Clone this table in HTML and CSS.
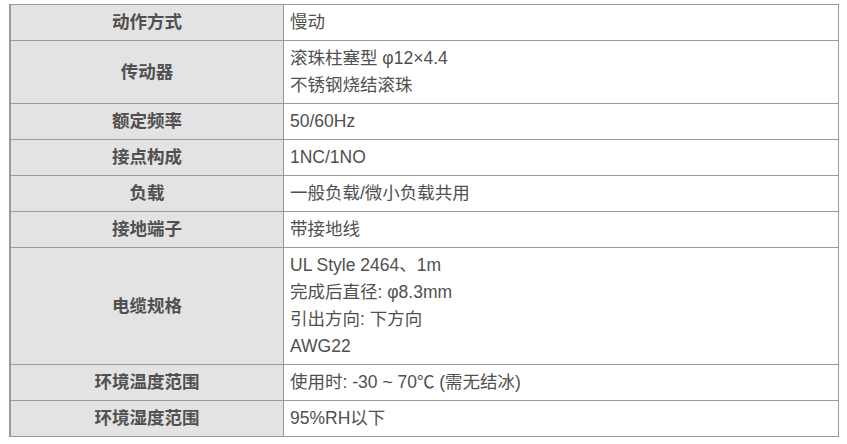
FILE: index.html
```html
<!DOCTYPE html>
<html lang="zh-CN">
<head>
<meta charset="utf-8">
<link rel="stylesheet" href="styles.css">
</head>
<body>
<table class="spec">
  <tbody>
    <tr><th>动作方式</th><td>慢动</td></tr>
    <tr><th>传动器</th><td>滚珠柱塞型 φ12×4.4<br>不锈钢烧结滚珠</td></tr>
    <tr><th>额定频率</th><td>50/60Hz</td></tr>
    <tr><th>接点构成</th><td>1NC/1NO</td></tr>
    <tr><th>负载</th><td>一般负载/微小负载共用</td></tr>
    <tr><th>接地端子</th><td>带接地线</td></tr>
    <tr><th>电缆规格</th><td>UL Style 2464、1m<br>完成后直径: φ8.3mm<br>引出方向: 下方向<br>AWG22</td></tr>
    <tr><th>环境温度范围</th><td>使用时: -30 ~ 70℃ (需无结冰)</td></tr>
    <tr><th>环境湿度范围</th><td>95%RH以下</td></tr>
  </tbody>
</table>
</body>
</html>
```
FILE: styles.css
```css
html, body {
  margin: 0;
  background: #ffffff;
}
body {
  padding: 4px 0 0 9px;
  font-family: "Liberation Sans", "Noto Sans CJK SC", sans-serif;
  font-size: 17.5px;
  color: #505050;
}
.spec {
  width: 830px;
  border-collapse: separate;
  border-spacing: 0;
  border-left: 2px solid #999999;
  border-top: 1px solid #999999;
}
.spec th,
.spec td {
  border-right: 1px solid #999999;
  border-bottom: 1px solid #999999;
  padding: 4px 6px;
  line-height: 27px;
  vertical-align: middle;
}
.spec th {
  width: 260px;
  background: #e3e3e3;
  font-weight: bold;
  text-align: center;
  color: #505050;
}
.spec td {
  text-align: left;
  font-weight: normal;
}
```
